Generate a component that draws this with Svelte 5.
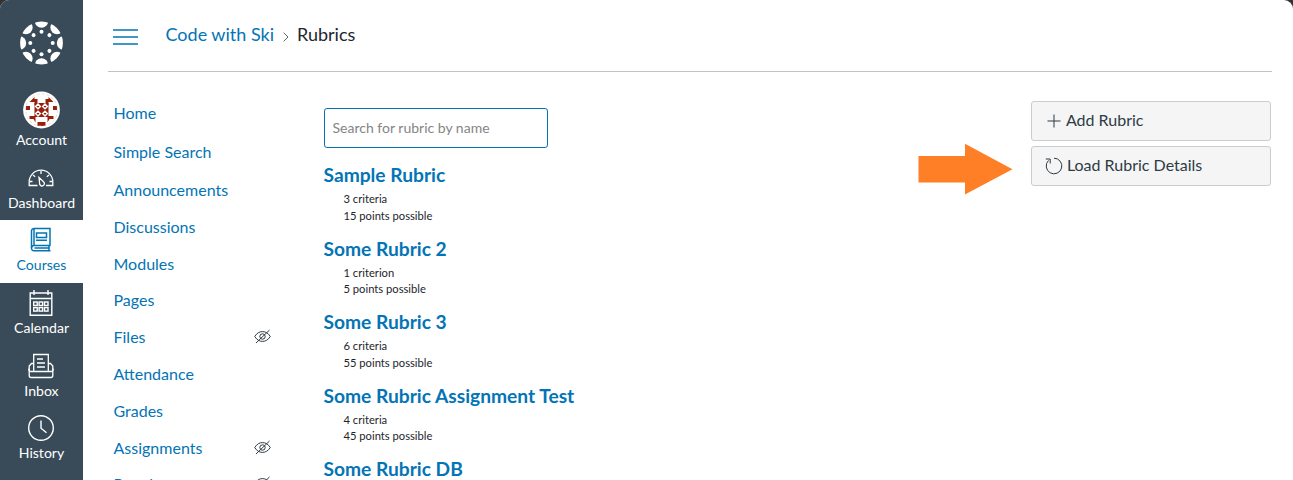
<script>
  const links = [
    { name: 'Home', h: 39 },
    { name: 'Simple Search', h: 38 },
    { name: 'Announcements' },
    { name: 'Discussions' },
    { name: 'Modules' },
    { name: 'Pages' },
    { name: 'Files', hidden: true },
    { name: 'Attendance' },
    { name: 'Grades' },
    { name: 'Assignments', hidden: true },
    { name: 'People', hidden: true }
  ];
  const rubrics = [
    ['Sample Rubric', '3 criteria', '15 points possible'],
    ['Some Rubric 2', '1 criterion', '5 points possible'],
    ['Some Rubric 3', '6 criteria', '55 points possible'],
    ['Some Rubric Assignment Test', '4 criteria', '45 points possible'],
    ['Some Rubric DB']
  ];
  const spokes = [0, 45, 90, 135, 180, 225, 270, 315];
  const cells = [0, 1].flatMap((r) => [0, 1, 2].map((c) => [c, r]));
</script>

<div class="screen">
  <aside>
    <svg class="logo" width="43" height="44" viewBox="-21.5 -22 43 44" fill="#fff">
      <clipPath id="disc"><circle r="21.4" /></clipPath>
      <g clip-path="url(#disc)">
        {#each spokes as a}
          <circle cy="-22" r="6.7" transform="rotate({a})" />
        {/each}
      </g>
      {#each spokes as a}
        <circle cy="-11.2" r="2" transform="rotate({a})" />
      {/each}
    </svg>

    <a class="item account">
      <svg width="37" height="38" viewBox="-18.5 -19 37 38">
        <circle r="18.4" fill="#fff" />
        <g fill="#991f0c">
          <path d="M-12-8L-7-13V-11H-4V-5H-7V-8ZM12-8L7-13V-11H4V-5H7V-8ZM-12 6H-6V12.500L-8 9H-12ZM12 6H6V12.500L8 9H12Z" />
          <rect x="-4" y="12" width="8" height="4" />
          <rect x="-15.500" y="-4" width="4" height="4" />
          <rect x="11.500" y="-4" width="4" height="4" />
          <rect x="-7" y="-7" width="14" height="14" />
        </g>
        <path fill="none" stroke="#fff" stroke-width="1.400" d="M-3.500-6l2.400 2.400-2.400 2.400-2.400-2.400zM3.500-6l2.400 2.400-2.400 2.400-2.400-2.400zM-3.500 1.200l2.400 2.400-2.400 2.400-2.400-2.400zM3.500 1.200l2.400 2.400-2.400 2.400-2.400-2.400z" />
        <circle r="16" fill="none" stroke="#e6c6c1" stroke-width=".6" stroke-dasharray="3 2" />
      </svg>
      <span>Account</span>
    </a>

    <a class="item dashboard">
      <svg width="27" height="26" viewBox="0 0 27 26" fill="none" stroke="#fff" stroke-width="1.300">
        <path d="M9.500 20.500H1.200V17a11.800 11.800 0 0 1 23.600 0V20.500H18" />
        <path d="M13 6v3M5 10l2.200 1.800M21 10l-2.200 1.800M2 16.500h2.500M24 16.500h-2.500" />
        <path d="M11 12.500l4.500 4.200a2.400 2.400 0 1 1-3.800 2.600z" />
      </svg>
      <span>Dashboard</span>
    </a>

    <a class="item active">
      <svg width="27" height="26" viewBox="0 0 27 26" fill="none" stroke="#0374b5" stroke-width="1.500">
        <path d="M22 18.500V1.500H6A2.500 2.500 0 0 0 3.500 4V21A2.500 2.500 0 0 0 6 23.700H22.500" />
        <path d="M22.500 18.500H6A2.500 2.500 0 0 0 3.500 21M6 1.500V18M21 18.500V23.700M6.500 21.100H20.500" />
        <rect x="8.500" y="6" width="10" height="4.500" />
        <path d="M8 13.200H19" />
      </svg>
      <span>Courses</span>
    </a>

    <a class="item calendar">
      <svg width="27" height="28" viewBox="0 0 27 28" fill="none" stroke="#fff" stroke-width="1.400">
        <path d="M2.200 4H23.800V26.300H2.200ZM2.200 9.500H23.800M6 1V6M20 1V6" />
        {#each cells as [c, r]}
          <rect x={5.7 + c * 5.4} y={13 + r * 5.6} width="3.500" height="3.500" />
        {/each}
      </svg>
      <span>Calendar</span>
    </a>

    <a class="item inbox">
      <svg width="27" height="26" viewBox="0 0 27 26" fill="none" stroke="#fff" stroke-width="1.300">
        <path d="M5.700 18V1.500H20.300V18M9 6H15M9 10H17M9 14H17" />
        <path d="M5.700 10.500H3.500L1.200 13V22.500A2 2 0 0 0 3.200 24.500H22.800A2 2 0 0 0 24.800 22.500V13L22.500 10.500H20.300" />
        <path d="M1.200 15.500A2 2 0 0 0 3.200 18.500H22.800A2 2 0 0 0 24.800 15.500" />
      </svg>
      <span>Inbox</span>
    </a>

    <a class="item history">
      <svg width="29" height="28" viewBox="0 0 29 28" fill="none" stroke="#fff" stroke-width="1.400">
        <circle cx="14" cy="14" r="12.300" />
        <path d="M14 6.500V14.200L19.500 18.700" />
      </svg>
      <span>History</span>
    </a>
  </aside>

  <main>
    <header>
      <svg class="menu" width="25" height="18" viewBox="0 0 25 18" stroke="#0374b5" stroke-width="1.600">
        <path d="M0 2H25M0 9H25M0 16H25" />
      </svg>
      <a class="crumb">Code with Ski</a>
      <svg class="sep" width="6" height="10" viewBox="0 0 6 10" fill="none" stroke="#5a666f"><path d="M.7.700L5 5L.7 9.300" /></svg>
      <span class="crumb here">Rubrics</span>
    </header>

    <div class="body">
      <nav>
        {#each links as l}
          <a style:height="{l.h ?? 36.8}px">
            <span>{l.name}</span>
            {#if l.hidden}
              <svg width="17" height="15" viewBox="0 0 17 15" fill="none" stroke="#2d3b45">
                <path d="M.7 7.500C3 4 5.500 2.600 8.500 2.600S14 4 16.300 7.500C14 11 11.500 12.400 8.500 12.400S3 11 .7 7.500Z" />
                <circle cx="8.500" cy="7.500" r="2.700" />
                <path d="M2 14L15.500 1" />
              </svg>
            {/if}
          </a>
        {/each}
      </nav>

      <section>
        <input placeholder="Search for rubric by name" />
        {#each rubrics as [name, ...facts]}
          <article>
            <h2>{name}</h2>
            {#each facts as fact}
              <p>{fact}</p>
            {/each}
          </article>
        {/each}
      </section>

      <svg class="arrow" width="96" height="52" viewBox="0 0 96 52">
        <path d="M.5 13H47V.800L94.500 26.200L47 51.500V39.500H.5Z" fill="#ff7f27" />
      </svg>

      <div class="actions">
        <button class="add">
          <svg width="14" height="14" viewBox="0 0 14 14" stroke="#2d3b45" fill="none"><path d="M7 .5V13.500M.5 7H13.500" /></svg>
          <span>Add Rubric</span>
        </button>
        <button class="load">
          <svg width="18" height="18" viewBox="0 0 18 18" stroke="#2d3b45" fill="none"><path d="M9 1.200A7.800 7.800 0 1 1 3.500 3.500M.8 2H5.200V6.500" /></svg>
          <span>Load Rubric Details</span>
        </button>
      </div>
    </div>
  </main>
</div>

<style>
  :global(body) { background: #333; overflow: hidden; }
  .screen {
    display: flex; width: 1293px; height: 480px; overflow: hidden;
    font-family: Lato, sans-serif; background: #fff; color: #2d3b45;
    border-radius: 9px 9px 0 0;
  }
  aside {
    width: 83px; height: 480px; flex: none; background: #394b58;
    display: flex; flex-direction: column; align-items: center; overflow: hidden;
  }
  .logo { margin-top: 20.500px; flex: none; }
  .item {
    width: 100%; height: 63px; flex: none; box-sizing: border-box;
    display: flex; flex-direction: column; align-items: center; justify-content: flex-end;
    color: #fff; font-size: 14.080px; line-height: 18px; padding-bottom: 8px;
  }
  .item span { display: block; }
  .item svg { flex: none; }
  .account { height: 92.500px; padding-bottom: 8px; }
  .account svg { margin-bottom: 2px; }
  .dashboard svg { margin-bottom: 3px; }
  .active { background: #fff; color: #0374b5; padding-bottom: 9px; }
  .active svg { margin-bottom: 3px; }
  .calendar { padding-bottom: 9px; }
  .calendar svg { margin-bottom: 2px; }
  .inbox { padding-bottom: 9px; }
  .inbox svg { margin-bottom: 3px; }
  .history { padding-bottom: 10px; }
  .history svg { margin-bottom: 2px; }
  main { flex: 1; min-width: 0; margin-left: 1px; }
  header {
    display: flex; align-items: center; height: 72px; box-sizing: border-box;
    margin: 0 21px 0 24px; padding: 0 0 2px 5px; border-bottom: 1px solid #c2c2c2;
  }
  .menu { margin-top: 5px; margin-right: 27.500px; }
  .crumb { font-size: 18px; line-height: 24px; color: #0374b5; white-space: nowrap; padding-bottom: 2px; }
  .sep { margin: 4px 8.500px 0 8.500px; }
  .here { color: #1d262d; }
  .body { display: flex; padding: 0 21.600px 0 29.500px; }
  nav { width: 160px; padding-top: 22px; margin-right: 50px; }
  nav a {
    display: flex; justify-content: space-between; align-items: flex-start;
    color: #0374b5; font-size: 16px;
  }
  nav span { line-height: 37px; }
  nav svg { margin-top: 11px; margin-right: 3px; }
  section { width: 594.500px; padding-top: 36px; }
  input {
    display: block; width: 224px; height: 40px; box-sizing: border-box; margin: 0 0 13px;
    border: 1px solid #0374b5; border-radius: 3px; padding: 0 8px 2px;
    font: 14px Lato, sans-serif; background: #fff;
  }
  input::placeholder { color: #858585; opacity: 1; }
  article { height: 73.500px; }
  h2 { margin: 0 0 3px; font-size: 19.200px; line-height: 27px; color: #0374b5; font-weight: 700; white-space: nowrap; }
  p { margin: 0 0 0 20px; font-size: 11.200px; line-height: 16.800px; color: #1d262d; }
  .arrow { margin-top: 71px; flex: none; }
  .actions { width: 240px; flex: none; margin-left: auto; padding-top: 29px; display: flex; flex-direction: column; gap: 5px; }
  button {
    display: flex; align-items: center; height: 40px; box-sizing: border-box;
    border: 1px solid #c7cdd1; border-radius: 3px; background: #f5f5f5; color: #2d3b45;
    font: 16px Lato, sans-serif; padding: 0 0 0 15px; gap: 4.500px;
  }
  button span { padding-bottom: 3px; }
  .load { padding-left: 13px; gap: 3.500px; }
</style>
